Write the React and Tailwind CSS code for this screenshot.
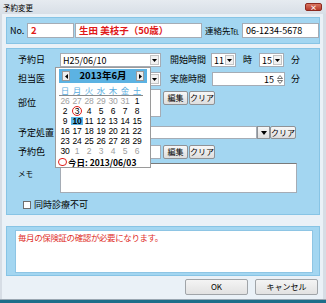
import React from 'react';

const Arrow = () => (
  <svg width="5" height="3" viewBox="0 0 5 3"><path d="M0 0h5L2.5 3z" fill="#000" /></svg>
);

const Select = ({ w, children }) => (
  <div className={`${w} h-[14px] bg-white border border-[#a5acb5] flex items-center justify-between pl-[2px] pr-[1px]`}>
    <span className="text-[9px] leading-none">{children}</span>
    <span className="w-[9px] h-[10px] bg-[#f1f1f1] border border-[#c4c4c4] flex items-center justify-center">
      <Arrow />
    </span>
  </div>
);

const Btn = ({ w, children }) => (
  <button className={`${w} h-[14px] border border-[#8f9296] rounded-[2px] bg-gradient-to-b from-[#f7f7f7] to-[#dedede] text-[8px] leading-none flex items-center justify-center`}>
    {children}
  </button>
);

const Box = ({ w, h, children, className = '' }) => (
  <div className={`${w} ${h} bg-white border border-[#a5acb5] ${className}`}>{children}</div>
);

const prev = ['26', '27', '28', '29', '30', '31'];
const weeks = [
  [...prev.map(d => ({ d, g: true })), { d: '1' }],
  ['2', '3', '4', '5', '6', '7', '8'].map(d => ({ d })),
  ['9', '10', '11', '12', '13', '14', '15'].map(d => ({ d })),
  ['16', '17', '18', '19', '20', '21', '22'].map(d => ({ d })),
  ['23', '24', '25', '26', '27', '28', '29'].map(d => ({ d })),
  [{ d: '30' }, ...['1', '2', '3', '4', '5', '6'].map(d => ({ d, g: true }))],
];

const Calendar = () => (
  <div className="absolute left-[55px] top-[67px] w-[96px] h-[101px] bg-white border border-[#9a9a9a] px-[3px] pt-[1px]">
    <div className="h-[14px] bg-[#5cb2e2] flex items-center justify-between px-[3px]">
      <span className="w-[8px] h-[10px] bg-[#eeeeee] border border-[#9a9a9a] flex items-center justify-center">
        <svg width="3" height="5" viewBox="0 0 3 5"><path d="M3 0v5L0 2.5z" fill="#000" /></svg>
      </span>
      <span className="text-[9.5px] font-bold leading-none">2013年6月</span>
      <span className="w-[8px] h-[10px] bg-[#eeeeee] border border-[#9a9a9a] flex items-center justify-center">
        <svg width="3" height="5" viewBox="0 0 3 5"><path d="M0 0v5L3 2.5z" fill="#000" /></svg>
      </span>
    </div>
    <div className="mt-[2px] grid grid-cols-7 w-[84px] h-[11px] border-b border-[#8a8a8a] text-[#5aaee0] text-[8.5px] leading-none items-center">
      {['日', '月', '火', '水', '木', '金', '土'].map(d => (
        <span key={d} className="text-center">{d}</span>
      ))}
    </div>
    {weeks.map((row, i) => (
      <div key={i} className="grid grid-cols-7 w-[84px] h-[10px] font-['Liberation_Sans',sans-serif] text-[8.5px] leading-none items-center tracking-[-0.2px]">
        {row.map((c, j) => (
          <span
            key={j}
            className={`relative text-center ${c.g ? 'text-[#a0a0a0]' : 'text-black'} ${i === 2 && j === 1 ? 'bg-[#5db8ea] text-[#0a4f8a] font-bold' : ''}`}
          >
            {c.d}
            {i === 1 && j === 1 && (
              <span className="absolute left-[1px] top-[-1px] w-[10px] h-[10px] rounded-full border border-[#e0201c]" />
            )}
          </span>
        ))}
      </div>
    ))}
    <div className="flex items-center h-[10px] mt-[1px]">
      <span className="w-[9px] h-[8px] rounded-full border border-[#e0201c] -ml-[1px]" />
      <span className="ml-[1px] text-[8.5px] font-bold leading-none">今日: 2013/06/03</span>
    </div>
  </div>
);

export default function App() {
  return (
    <div className="relative w-[326px] h-[303px] bg-[#d6dde5] flex flex-col font-['Noto_Sans_CJK_JP','Liberation_Sans',sans-serif] text-black overflow-hidden">
      {/* title bar */}
      <div className="h-[14px] flex items-start justify-between pl-[3px] pr-[4px] bg-gradient-to-b from-[#e6ebf0] to-[#d8dfe7]">
        <span className="text-[7.5px] leading-none mt-[4px]">予約変更</span>
        <span className="mt-[3px] w-[17px] h-[8px] rounded-[2px] bg-gradient-to-b from-[#d9745f] to-[#b8392a] border border-[#8c2a20] flex items-center justify-center text-white text-[7px] leading-none font-bold">×</span>
      </div>

      <div className="flex-1 mx-[2px] mr-[3px] bg-[#eaf1f7] flex flex-col pl-[4px] pr-[3px]">
        {/* patient */}
        <div className="mt-[3px] h-[27px] border border-[#87c4e5] bg-[#a3d6f1] pt-[5px] pl-[3px] flex items-start">
          <span className="w-[17px] text-[9px] leading-[15px]">No.</span>
          <Box w="w-[47px]" h="h-[15px]" className="pl-[3px] text-[9.5px] leading-[13px] text-[#e01818] font-bold">2</Box>
          <Box w="w-[127px] ml-[1px]" h="h-[15px]" className="pl-[3px] text-[9.5px] leading-[13px] text-[#e01818] font-bold">生田 美枝子（50歳）</Box>
          <span className="ml-[3px] w-[37px] text-[8.5px] leading-[15px]">連絡先℡</span>
          <Box w="w-[77px]" h="h-[15px]" className="pl-[3px] text-[9px] leading-[13px]">06-1234-5678</Box>
        </div>

        {/* main form */}
        <div className="mt-[4px] h-[167px] border border-[#87c4e5] bg-[#a3d6f1] pt-[4px] text-[9px]">
          <div className="flex items-center h-[14px]">
            <span className="w-[53px] pl-[11px]">予約日</span>
            <Select w="w-[101px]">H25/06/10</Select>
            <span className="ml-[9px] w-[41px]">開始時間</span>
            <Select w="w-[25px]">11</Select>
            <span className="w-[23px] pl-[7px]">時</span>
            <Select w="w-[25px]">15</Select>
            <span className="ml-[7px]">分</span>
          </div>
          <div className="mt-[5px] flex items-center h-[14px]">
            <span className="w-[53px] pl-[11px]">担当医</span>
            <Select w="w-[101px]"></Select>
            <span className="ml-[9px] w-[42px]">実施時間</span>
            <div className="w-[73px] h-[14px] bg-white border border-[#a5acb5] flex items-center justify-end">
              <span className="text-[9px] leading-none mr-[2px]">15</span>
              <span className="w-[8px] h-[12px] flex flex-col items-center justify-center gap-[1px]">
                <svg width="6" height="4" viewBox="0 0 6 4"><path d="M3 .5L5.5 3.5H.5z" fill="none" stroke="#555" strokeWidth="0.8" /></svg>
                <svg width="6" height="4" viewBox="0 0 6 4"><path d="M3 3.5L5.5 .5H.5z" fill="none" stroke="#555" strokeWidth="0.8" /></svg>
              </span>
            </div>
            <span className="ml-[6px]">分</span>
          </div>
          <div className="mt-[3px] flex items-start h-[28px]">
            <span className="w-[53px] pl-[11px] self-center">部位</span>
            <Box w="w-[101px]" h="h-[28px]" />
            <div className="ml-[2px] mt-[2px] flex gap-[1px]">
              <Btn w="w-[25px]">編集</Btn>
              <Btn w="w-[26px]">クリア</Btn>
            </div>
          </div>
          <div className="mt-[9px] flex items-center h-[13px]">
            <span className="w-[53px] pl-[11px]">予定処置</span>
            <Box w="w-[197px]" h="h-[13px]" />
            <span className="w-[13px] h-[13px] border border-[#8f9296] bg-gradient-to-b from-[#f7f7f7] to-[#dedede] flex items-center justify-center">
              <svg width="6" height="4" viewBox="0 0 6 4"><path d="M0 0h6L3 4z" fill="#000" /></svg>
            </span>
            <Btn w="w-[26px] !h-[13px]">クリア</Btn>
          </div>
          <div className="mt-[6px] flex items-center h-[14px]">
            <span className="w-[53px] pl-[11px]">予約色</span>
            <Box w="w-[101px]" h="h-[14px]" />
            <div className="ml-[2px] flex gap-[1px]">
              <Btn w="w-[25px]">編集</Btn>
              <Btn w="w-[26px]">クリア</Btn>
            </div>
          </div>
          <div className="mt-[4px] flex items-start h-[30px]">
            <span className="w-[53px] pl-[11px] pt-[5px] text-[7.5px]">メモ</span>
            <Box w="w-[237px]" h="h-[30px]" className="border-t-[#7a7a7a]" />
          </div>
          <div className="mt-[7px] flex items-center h-[10px] pl-[16px]">
            <span className="w-[8px] h-[8px] bg-white border border-[#6f6f6f]" />
            <span className="ml-[3px]">同時診療不可</span>
          </div>
        </div>

        {/* message */}
        <div className="mt-[11px] h-[50px] border border-[#87c4e5] bg-[#a3d6f1] pt-[3px] pl-[8px]">
          <div className="w-[298px] h-[43px] bg-white border border-[#8ec5e4] pl-[2px] pt-[1px] text-[8.5px] leading-[11px] text-[#e0302a] tracking-[-0.4px]">
            毎月の保険証の確認が必要になります。
          </div>
        </div>

        {/* buttons */}
        <div className="mt-[3px] flex justify-end gap-[7px] pr-[2px]">
          <button className="w-[63px] h-[16px] border border-[#a0a4a8] rounded-[2px] bg-gradient-to-b from-[#f4f4f4] to-[#e2e2e2] text-[8px] leading-none">OK</button>
          <button className="w-[63px] h-[16px] border border-[#a0a4a8] rounded-[2px] bg-gradient-to-b from-[#f4f4f4] to-[#e2e2e2] text-[8px] leading-none">キャンセル</button>
        </div>
      </div>
      <div className="h-[4px] bg-[#1d6e8a] border-t border-[#9aa7b2]" />

      <Calendar />
    </div>
  );
}
